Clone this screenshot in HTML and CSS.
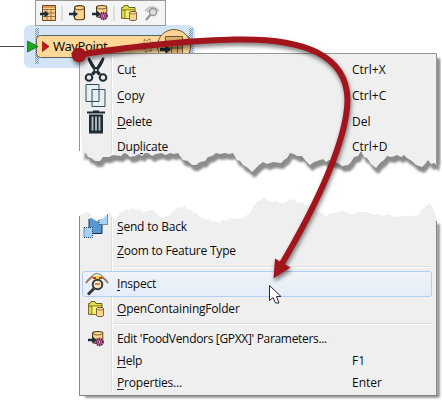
FILE: index.html
```html
<!DOCTYPE html>
<html lang="en">
<head>
<meta charset="utf-8">
<title>Feature type menu</title>
<link rel="stylesheet" href="styles.css">
</head>
<body>
<svg class="defs" width="0" height="0">
  <defs>
    <symbol id="arrow-in" viewBox="0 0 10 8"><path d="M0 2.500H5V0L10 4L5 8V5.500H0Z" fill="#1c2e38"/></symbol>
    <symbol id="cyl" viewBox="0 0 12 15" preserveAspectRatio="none"><path d="M.6 2.500Q.6 .6 6 .6T11.400 2.500V12.500Q11.400 14.400 6 14.400T.6 12.500Z" fill="#ffd58c" stroke="#4a381c" stroke-width="1.200"/><path d="M1 3Q1.500 4.600 6 4.600T11 3" fill="none" stroke="#6d5228"/></symbol>
    <symbol id="gear" viewBox="0 0 10 10"><circle cx="5" cy="5" r="3.800" fill="#c765a0" stroke="#5d1b48" stroke-width="2" stroke-dasharray="1.600 .8"/><circle cx="5" cy="5" r="1.500" fill="#e9a6cf" stroke="#5d1b48" stroke-width=".8"/></symbol>
    <symbol id="table-in" viewBox="0 0 16 16"><path d="M2.500 .5H15.500V15.500H2.500Z" fill="#f9cf8e" stroke="#6b4a25"/><path d="M3 2H15" stroke="#d99b55" stroke-width="2"/><path d="M3 4.500H15M3 8H15M3 11.500H15M7 4V15M11 4V15" stroke="#8b6335" fill="none" stroke-width=".8"/><use href="#arrow-in" x="0" y="5" width="9" height="8"/></symbol>
    <symbol id="cyl-in" viewBox="0 0 16 16"><use href="#cyl" x="5" y="0" width="11" height="15.500"/><use href="#arrow-in" x="0" y="5" width="9" height="8"/></symbol>
    <symbol id="cyl-gear" viewBox="0 0 16 16"><use href="#cyl" x="4" y="0" width="11.500" height="13"/><use href="#arrow-in" x="0" y="5" width="9" height="8"/><use href="#gear" x="7" y="6" width="9" height="10"/></symbol>
    <symbol id="folder" viewBox="0 0 16 16"><path d="M.6 13.400V2.500H2L3 .6H7L8 2.500H14V13.400Z" fill="#e5df4c" stroke="#67651d"/><path d="M1 5H14M4 5V13" stroke="#67651d"/><path d="M4.500 5.500H13V13H4.500Z" fill="#f4ee77"/><use href="#cyl" x="8" y="6" width="8" height="10"/></symbol>
  </defs>
</svg>
<main class="canvas">
  <svg class="link" width="442" height="80" viewBox="0 0 442 80">
    <path d="M0 46.500H28" stroke="#4b4b4b"/>
  </svg>
  <div class="halo"></div>
  <svg class="node-art" width="200" height="80" viewBox="0 0 200 80">
    <defs><pattern id="dots" width="2" height="2" patternUnits="userSpaceOnUse"><path d="M0 0h1v1H0zM1 1h1v1H1z" fill="#8194aa"/></pattern></defs>
    <path d="M35 28h4v36h-4zM189 28h4v36h-4z" fill="url(#dots)"/>
    <rect x="36.500" y="35.500" width="153" height="22" rx="4" fill="#ffd797" stroke="#56616b"/>
    <path d="M27.500 41L38 46.500L27.500 52Z" fill="#1ba91b" stroke="#17631a" stroke-width=".8"/>
    <path d="M42.500 41.500L49 46.500L42.500 51.500Z" fill="#c9151b" stroke="#7d2520" stroke-width=".8"/>
    <circle cx="147.500" cy="45.500" r="6" fill="none" stroke="#9a8050" stroke-width="2" stroke-dasharray="2.350 2.350"/>
    <circle cx="147.500" cy="45.500" r="4.900" fill="#ffd797" stroke="#9a8050" stroke-width="1"/>
    <circle cx="147.500" cy="45.500" r="4.900" fill="none" stroke="#ffd797" stroke-width="1.200" stroke-dasharray="1.900 1.950"/>
    <circle cx="174" cy="46" r="16.500" fill="#fbd394" stroke="#6d5c40"/>
    <path d="M165.500 36.500H182.500V54H165.500Z" fill="#dbb071" stroke="#695337"/><path d="M165 41.500H183M165 48H183M171.500 41V54M177.500 41V54" stroke="#695337" fill="none"/>
    <use href="#arrow-in" x="160" y="45" width="11" height="9"/>
  </svg>
  <span class="node-name">WayPoint</span>
  <div class="toolbar">
    <svg><use href="#table-in"/></svg><i></i>
    <svg><use href="#cyl-in"/></svg>
    <svg class="second"><use href="#cyl-gear"/></svg><i></i>
    <svg><use href="#folder"/></svg>
    <svg class="last" viewBox="0 0 16 16"><path d="M1 6Q8-2 15 6M3 7Q8 1 13 7" fill="none" stroke="#bbb" stroke-width="1.500"/><circle cx="9" cy="7" r="3.600" fill="#ddd" stroke="#969696" stroke-width="1.500"/><path d="M6.300 10L2 15" stroke="#969696" stroke-width="2.200"/></svg>
  </div>

  <svg class="sheets" width="442" height="401" viewBox="0 0 442 401">
    <defs>
      <filter id="soft" x="-10%" y="-10%" width="120%" height="130%"><feGaussianBlur stdDeviation=".8"/></filter>
      <path id="upper" d="M79 53H437V165L434 163 431 164 428 160 425 164 422 167 416 165 412 161 407 158 404 155 401 157 397 155 392 157 387 156 384 160 380 163 376 168 371 164 367 158 364 157 361 151 358 156 354 157 351 162 348 165 342 166 338 163 333 162 329 160 326 162 323 159 317 161 314 162 310 165 305 160 302 156 297 156 294 154 290 153 287 158 284 160 281 163 273 162 267 164 263 162 259 165 256 168 252 172 248 168 243 165 240 161 237 160 233 153 229 154 225 153 220 154 216 153 212 156 208 157 205 161 200 162 196 165 192 165 188 161 183 160 180 156 178 153 174 154 170 153 166 155 161 153 156 154 152 156 148 153 145 153 142 156 139 154 135 156 130 157 127 154 124 153 121 156 113 155 109 157 103 157 100 161 95 161 91 158 88 157 86 153 82 154Z"/>
    </defs>
    <path d="M437 58H440V165H437Z" fill="#999" filter="url(#soft)"/>
    <use href="#upper" transform="translate(2.500 6)" fill="#8c8c8c" filter="url(#soft)"/>
    <path d="M76 120H79V180H76Z" fill="#fff"/>
    <use href="#upper" fill="#efefef"/>
    <path d="M79.500 151V53.500H436.500V164" fill="none" stroke="#969696"/>
    <path d="M111.500 55V155" stroke="#dedede"/><path d="M112.500 55V155" stroke="#fff"/>
    <path d="M437 224H439.500V397.500H85V395H437Z" fill="#777" filter="url(#soft)"/>
    <path d="M79 216L82 214 87 212 90 213 92 216 97 220 101 219 104 216 107 214 110 212 112 216 114 220 118 217 120 213 123 212 126 209 130 210 133 208 136 210 140 209 143 212 148 211 152 210 157 213 160 217 163 218 166 216 170 215 173 211 176 210 178 207 181 208 184 206 188 209 191 210 194 213 197 213 200 217 205 219 209 220 212 222 216 221 219 223 223 220 227 221 230 218 235 219 239 218 243 218 247 215 250 214 252 208 255 205 257 202 261 200 265 197 268 201 272 202 276 201 280 203 285 203 289 200 293 199 298 203 302 202 306 205 310 204 314 209 318 212 322 213 326 216 331 213 335 213 340 211 347 212 350 214 354 214 358 212 365 212 370 213 374 215 379 214 384 216 388 214 396 217 403 216 412 216 419 215 421 210 424 208 427 205 429 203 432 206 434 211 437 221V396H79Z" fill="#efefef"/>
    <path d="M79.500 216V395.500H436.500V221" fill="none" stroke="#858585"/>
    <path d="M111.500 217V392" stroke="#dedede"/><path d="M112.500 217V392" stroke="#fff"/>
  </svg>

  <div class="menu upper-menu">
    <div class="row"><svg width="24" height="24" viewBox="0 0 24 24"><path d="M4 0Q5 7 14.500 17L16.500 15.500Q10 9 5.500 0ZM20 0Q19 7 9.500 17L7.500 15.500Q14 9 18.500 0Z" fill="#1d2b33" stroke="#1d2b33"/><circle cx="5" cy="19.500" r="3.300" fill="none" stroke="#1d2b33" stroke-width="2"/><circle cx="19" cy="19.500" r="3.300" fill="none" stroke="#1d2b33" stroke-width="2"/></svg><span>Cu<u>t</u></span><kbd>Ctrl+X</kbd></div>
    <div class="row"><svg width="24" height="24" viewBox="0 0 24 24"><path d="M2 .5H15V17.500H2ZM8 5.500H21V22.500H8Z" fill="#e5f0f2" stroke="#334c57"/></svg><span><u>C</u>opy</span><kbd>Ctrl+C</kbd></div>
    <div class="row"><svg width="24" height="24" viewBox="0 0 24 24"><path d="M3 1.500H9V.5H15V1.500H21V3.500H3ZM5 4.500H19V23.500H5Z" fill="#1d2b33"/><path d="M8.500 6.500V20.500M12 6.500V20.500M15.500 6.500V20.500" stroke="#a9b6bb" stroke-width="2"/></svg><span><u>D</u>elete</span><kbd>Del</kbd></div>
    <div class="row short"><b></b><span>Dup<u>l</u>icate</span><kbd>Ctrl+D</kbd></div>
  </div>

  <div class="menu lower-menu">
    <div class="row short"><svg width="24" height="24" viewBox="0 0 24 24"><path d="M5 4L7 3L9 4L13 6.500L16 4.500L18 4V18.500H5Z" fill="#5797d2"/><path d="M5 4V18.500H18V10" fill="none" stroke="#17334e"/><path d="M15 5L20 3L23.500 -.5V9.500H15Z" fill="#a8d0f3"/><path d="M23.500 -.5V9.500H15V5" fill="none" stroke="#193b5b" stroke-dasharray="1 1"/><path d="M0 12.500H8.500V22.500H0Z" fill="#a8d0f3" stroke="#193b5b" stroke-dasharray="1 1"/></svg><span><u>S</u>end to Back</span></div>
    <div class="row short"><b></b><span><u>Z</u>oom to Feature Type</span></div>
    <hr>
    <div class="row hot"><svg width="24" height="24" viewBox="0 0 24 24"><path d="M4 8Q12-5 20 8" fill="#fff" stroke="#999" stroke-width="1.300"/><path d="M1 11Q5 5 9 5M15 5Q20 6 23 11" fill="none" stroke="#9b7565" stroke-width="1.800"/><path d="M8 3.500h8v4H8z" fill="#f7d850"/><path d="M8 6h3m3 0h3" stroke="#d12a20" stroke-width="2"/><circle cx="12.500" cy="12.500" r="4.800" fill="#f5e6cf" stroke="#393b3b" stroke-width="2"/><path d="M10 12h5" stroke="#e4803b" stroke-width="2"/><path d="M9 16.500L3 22.500" stroke="#363636" stroke-width="3"/></svg><span><u>I</u>nspect</span></div>
    <div class="row folder-row"><svg width="16" height="16"><use href="#folder"/></svg><span><u>O</u>penContainingFolder</span></div>
    <hr>
    <div class="row tight"><svg width="16" height="16"><use href="#cyl-gear"/></svg><span class="long">Edit 'FoodVendors [GPXX]' Parameters...</span></div>
    <div class="row tight"><b></b><span><u>H</u>elp</span><kbd>F1</kbd></div>
    <div class="row tight"><b></b><span><u>P</u>roperties...</span><kbd>Enter</kbd></div>
  </div>

  <svg class="overlay" width="442" height="401" viewBox="0 0 442 401">
    <g class="swoosh"><circle cx="79" cy="55" r="7.300" fill="#a3151c"/><path d="M79 55C105 50 175 41 235 39.500C304 38 347 55 347.500 100C347 139 318 203 280 267" fill="none" stroke="#a3151c" stroke-width="6"/><path d="M273.500 278.500L275 258.500L290.500 267.500Z" fill="#a3151c"/></g>
    <path d="M269.500 285.500V300.500L273 297.500L275.500 303H279L276.500 296.500H281Z" fill="#fff" stroke="#26263b"/>
  </svg>
</main>
</body>
</html>
```
FILE: styles.css
```css
body { margin: 0; background: #fff; }
.defs { position: absolute; }
.canvas {
  position: relative;
  width: 442px;
  height: 401px;
  overflow: hidden;
  font: 12px/18px "Open Sans", "Noto Sans", sans-serif;
  color: #0c0c0c;
}
.link, .node-art, .sheets, .overlay { position: absolute; left: 0; top: 0; }
.halo {
  position: absolute;
  left: 24px;
  top: 25px;
  width: 171px;
  height: 43px;
  border-radius: 6px;
  background: #d4e4f7;
}
.node-name {
  position: absolute;
  left: 53px;
  top: 37px;
  font: 13px/18px "Noto Sans", sans-serif;
  letter-spacing: -.4px;
}
.toolbar {
  position: absolute;
  left: 35px;
  top: 0;
  box-sizing: border-box;
  width: 131px;
  height: 26px;
  padding: 0 0 0 4px;
  display: flex;
  align-items: center;
  background: #f4f4f4;
  border: 1px solid #999;
}
.toolbar svg { width: 16px; height: 16px; flex: none; }
.toolbar i { width: 2px; height: 15px; margin: 0 6px 0 5px; background: #dedede; }
.toolbar .second { margin-left: 7px; }
.toolbar .last { margin-left: 7px; }
.menu { position: absolute; left: 80px; width: 356px; }
.upper-menu { top: 57px; }
.lower-menu { top: 215px; }
.row {
  display: grid;
  grid-template-columns: 31px 241px 1fr;
  align-items: center;
  box-sizing: border-box;
  height: 26px;
  white-space: nowrap;
}
.row > svg { justify-self: center; overflow: visible; }
.row span { padding-left: 6px; letter-spacing: -.2px; }
.row span.long { letter-spacing: -.32px; }
.row kbd { font: inherit; }
.row u { text-decoration: none; box-shadow: inset 0 -1px #222; display: inline-block; line-height: 14px; }
.row.short { height: 24px; }
.row.tight { height: 22px; }
.row.folder-row { height: 23px; }
.row.hot {
  margin: 0 4px 0 2px;
  grid-template-columns: 28px 1fr;
  border: 1px solid #aecff7;
  border-radius: 3px;
  background: linear-gradient(#f1f4f8, #e5edf8);
}
hr {
  height: 1px;
  margin: 3px 4px 3px 33px;
  border: 0;
  background: #dedede;
  border-bottom: 1px solid #fff;
}
.swoosh { filter: drop-shadow(1px 3px 2px rgba(0, 0, 0, .5)); }
```
